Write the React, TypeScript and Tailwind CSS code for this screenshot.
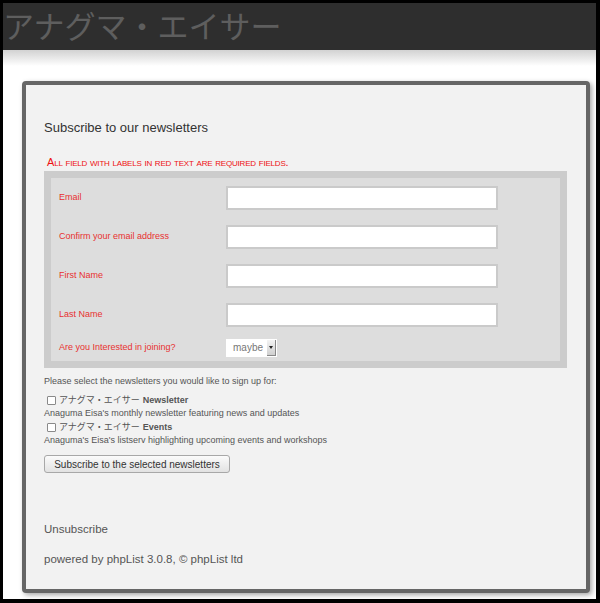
import React from 'react'

const fields = ['Email', 'Confirm your email address', 'First Name', 'Last Name']

const lists = [
  { name: 'Newsletter', info: "Anaguma Eisa's monthly newsletter featuring news and updates" },
  { name: 'Events', info: "Anaguma's Eisa's listserv highlighting upcoming events and workshops" }
]

export default function App() {
  return (
    <div className="w-[600px] h-[603px] bg-black pt-[3px] pl-[3px] pr-[4px] pb-[4px] font-['Liberation_Sans','Noto_Sans_CJK_JP',sans-serif]">
      <div className="h-full bg-white flex flex-col">
        {/* Site header */}
        <header className="h-[47px] bg-[#2e2e2e] overflow-hidden">
          <h1 className="text-[31px] leading-[44px] text-[#5e5e5e] font-['Noto_Sans_CJK_JP',sans-serif] font-normal">
            アナグマ・エイサー
          </h1>
        </header>
        <div className="h-[16px] bg-gradient-to-b from-[#d2d2d2] to-white" />

        {/* Main card */}
        <main className="mt-[15px] ml-[19px] mr-[6px] h-[512px] border-4 border-[#666] rounded-[4px] bg-[#f2f2f2] shadow-[2px_2px_5px_rgba(0,0,0,0.35)] pl-[18px] pr-[19px]">
          <h2 className="mt-[35px] text-[13px] leading-[15px] text-[#333]">Subscribe to our newsletters</h2>
          <p className="mt-[21px] ml-[3px] text-[11px] tracking-[-0.2px] leading-[13px] text-[#ee1111] [font-variant:small-caps]">
            All field with labels in red text are required fields.
          </p>

          {/* Form table */}
          <div className="mt-[2px] w-[523px] border-[7px] border-[#cccccc] bg-[#dddddd] flex flex-col">
            {fields.map((label) => (
              <div key={label} className="h-[39px] flex items-center">
                <label className="w-[175px] pl-[8px] pt-[1px] text-[9px] text-[#e83030]">{label}</label>
                <div className="w-[272px] h-[24px] border-2 border-[#cacaca] bg-white" />
              </div>
            ))}
            <div className="h-[27px] flex items-center">
              <label className="w-[175px] pl-[8px] pt-[1px] text-[9px] text-[#e83030]">Are you Interested in joining?</label>
              <div className="w-[51px] h-[18px] bg-white flex items-center justify-between">
                <span className="pl-[7px] text-[10px] text-[#777]">maybe</span>
                <span className="w-[9px] h-[16px] mr-[1px] bg-gradient-to-b from-[#f4f4f4] to-[#cfcfcf] border-r border-b border-[#888] flex items-center justify-center">
                  <span className="w-0 h-0 border-l-[2px] border-r-[2px] border-t-[3px] border-l-transparent border-r-transparent border-t-[#222]" />
                </span>
              </div>
            </div>
          </div>

          {/* Lists */}
          <p className="mt-[7px] text-[9px] leading-[12px] text-[#555]">
            Please select the newsletters you would like to sign up for:
          </p>
          <div className="mt-[7px] flex flex-col gap-[2px]">
            {lists.map((l) => (
              <div key={l.name}>
                <div className="flex items-center h-[13px] text-[9px] text-[#555]">
                  <span className="ml-[3px] mr-[3px] w-[9px] h-[9px] border border-[#8a8a8a] rounded-[1px] bg-white" />
                  <span>アナグマ・エイサー </span>
                  <b className="ml-[3px] text-[#555]">{l.name}</b>
                </div>
                <div className="text-[9px] leading-[12px] text-[#555]">{l.info}</div>
              </div>
            ))}
          </div>

          <button className="mt-[9px] w-[186px] h-[18px] border border-[#a8a8a8] rounded-[3px] bg-gradient-to-b from-[#fbfbfb] to-[#e2e2e2] text-[10px] text-[#333]">
            Subscribe to the selected newsletters
          </button>

          <p className="mt-[47px] text-[11.5px] leading-[14px] text-[#555]">Unsubscribe</p>
          <p className="mt-[16px] text-[11.5px] leading-[14px] text-[#555]">powered by phpList 3.0.8, © phpList ltd</p>
        </main>
      </div>
    </div>
  )
}
